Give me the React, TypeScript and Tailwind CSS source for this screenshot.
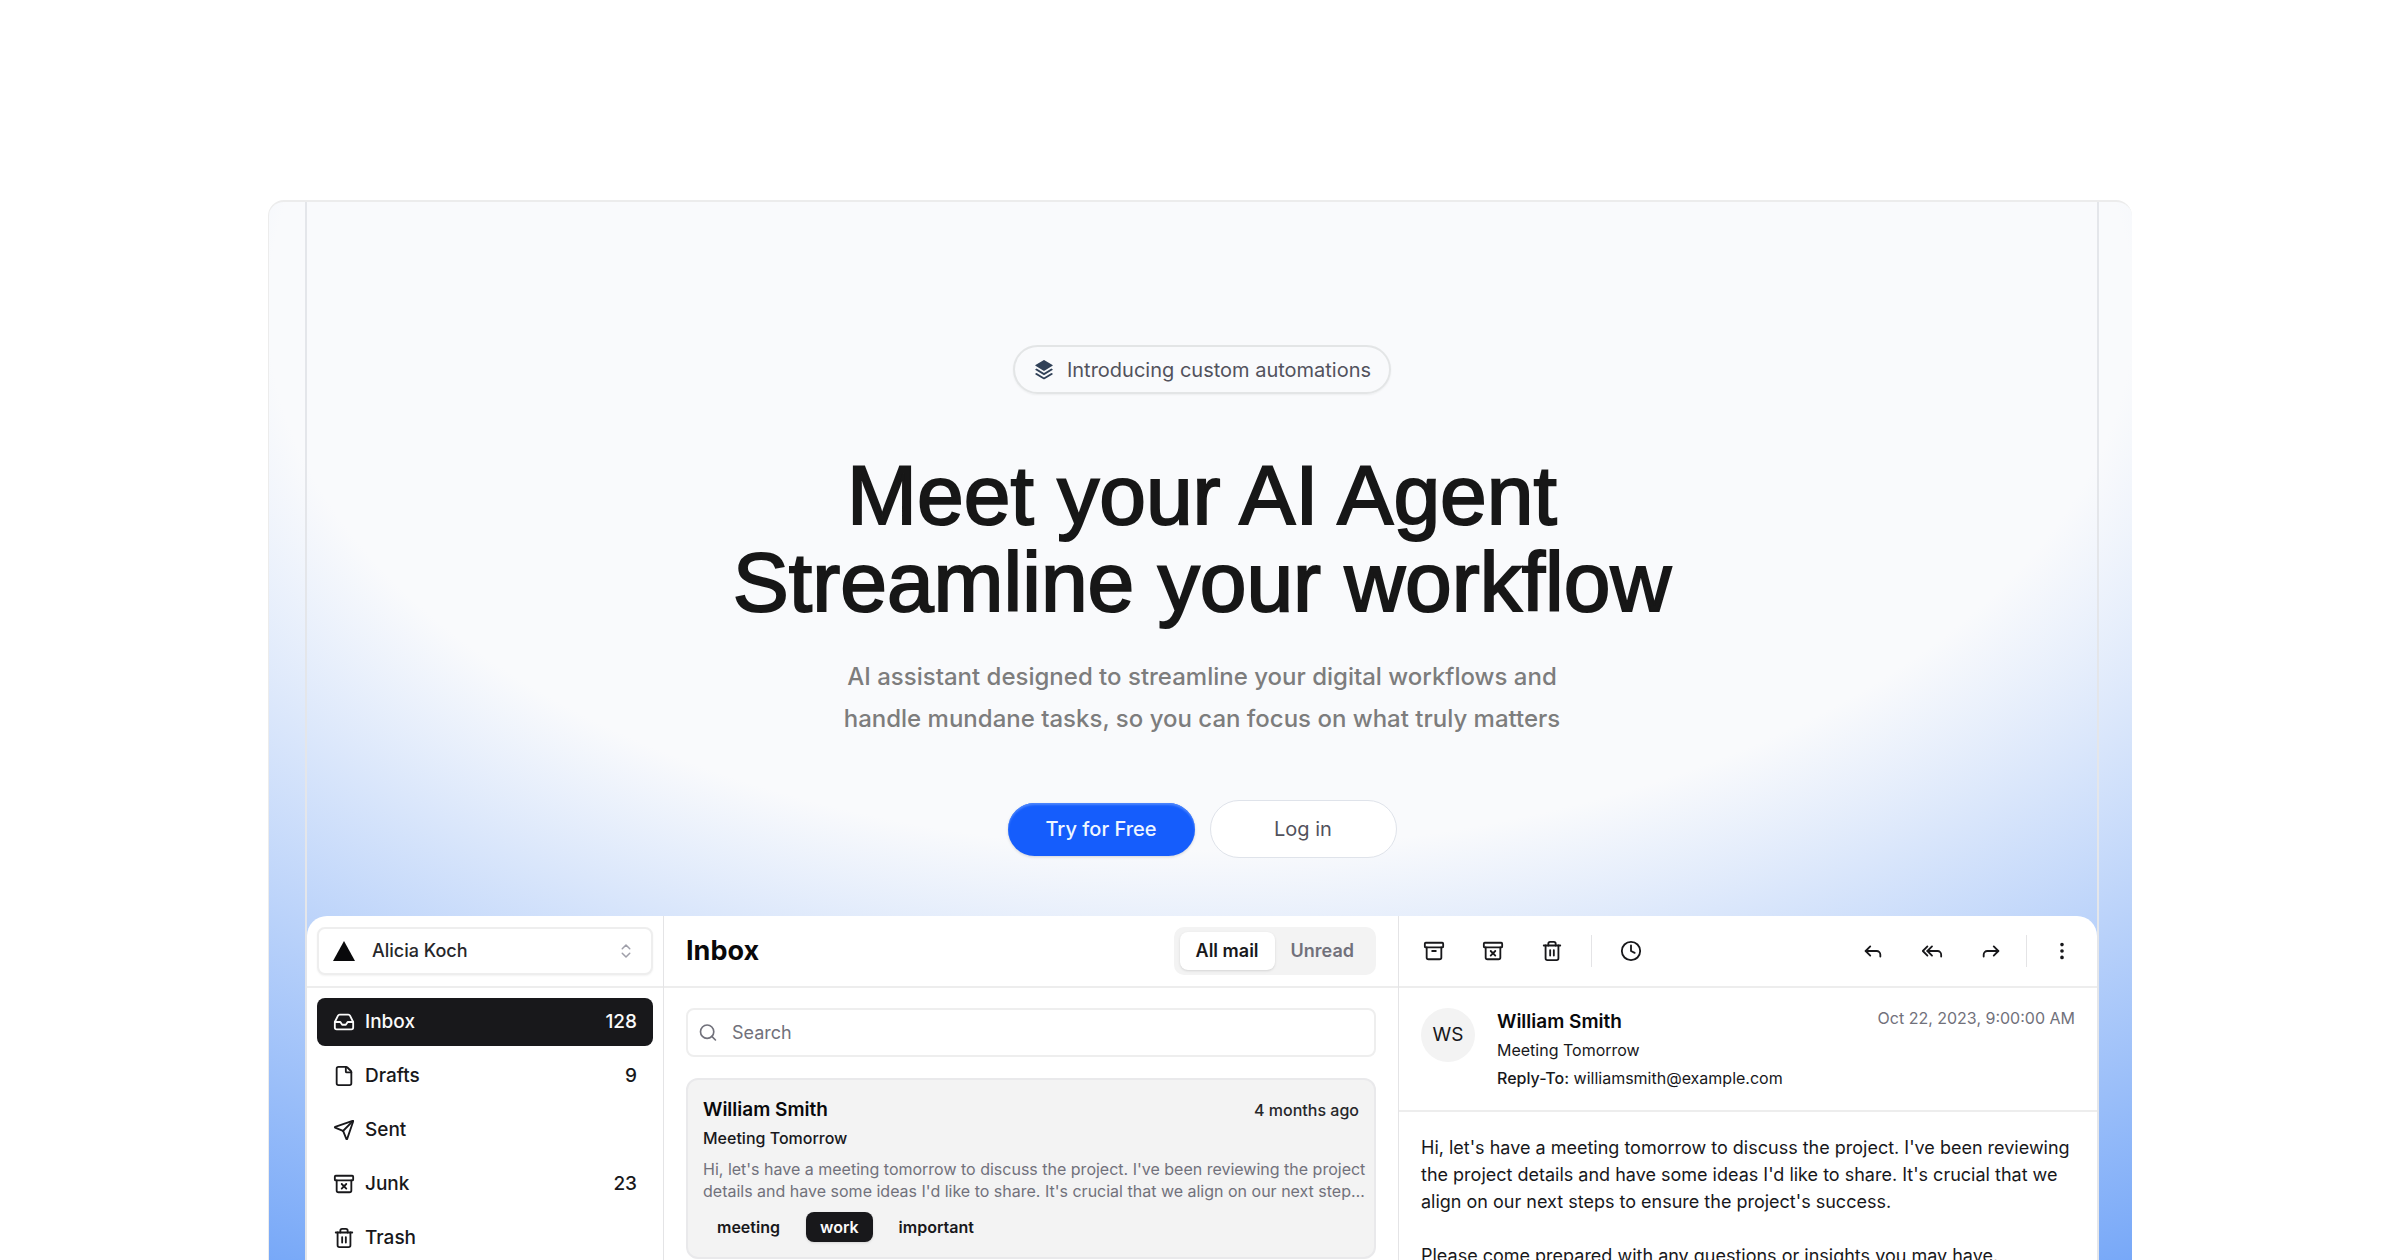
import type { ReactNode } from "react";
import {
  Archive,
  ArchiveX,
  ChevronsUpDown,
  Clock,
  EllipsisVertical,
  File,
  Forward,
  Inbox,
  Reply,
  ReplyAll,
  Search,
  Send,
  Trash2,
  type LucideIcon,
} from "lucide-react";
import { RiStackFill } from "react-icons/ri";

const folders: { label: string; icon: LucideIcon; count?: number }[] = [
  { label: "Inbox", icon: Inbox, count: 128 },
  { label: "Drafts", icon: File, count: 9 },
  { label: "Sent", icon: Send },
  { label: "Junk", icon: ArchiveX, count: 23 },
  { label: "Trash", icon: Trash2 },
];

function ToolButton({ label, icon: Icon }: { label: string; icon: LucideIcon }) {
  return (
    <button type="button" aria-label={label} className="grid size-12 place-items-center rounded-lg text-zinc-900">
      <Icon size={22} />
    </button>
  );
}

function ColumnHeader({ className, children }: { className: string; children: ReactNode }) {
  return (
    <header className={`flex h-18 shrink-0 items-center border-b-2 border-[#ededed] ${className}`}>{children}</header>
  );
}

function Sidebar() {
  return (
    <aside className="flex flex-col border-r border-[#e4e4e6]">
      <ColumnHeader className="px-2.5">
        <div className="relative w-full">
          <svg viewBox="0 0 22 20" className="pointer-events-none absolute top-3.5 left-4 h-5 w-[22px]" aria-hidden="true">
            <path d="M11 0 22 20H0Z" fill="#09090b" />
          </svg>
          <select
            aria-label="Account"
            className="h-12 w-full appearance-none rounded-lg border-2 border-[#eeeeee] bg-white pr-12 pl-[53px] text-lg font-medium text-zinc-800 shadow-xs"
          >
            <option>Alicia Koch</option>
          </select>
          <ChevronsUpDown
            size={18}
            className="pointer-events-none absolute top-[15px] right-[18px] text-zinc-400"
            aria-hidden="true"
          />
        </div>
      </ColumnHeader>
      <nav className="flex flex-col gap-1.5 px-2.5 py-2.5">
        {folders.map(({ label, icon: Icon, count }, i) => (
          <a
            key={label}
            href={`#${label.toLowerCase()}`}
            className={`flex h-12 shrink-0 items-center rounded-lg px-4 text-[19px] font-medium ${
              i === 0 ? "bg-[#18181b] text-zinc-50" : "text-zinc-900"
            }`}
          >
            <Icon size={22} className="mr-2.5" />
            {label}
            {count !== undefined && <span className="ml-auto">{count}</span>}
          </a>
        ))}
      </nav>
    </aside>
  );
}

function MailList() {
  return (
    <section className="flex flex-col border-r border-[#e4e4e6]">
      <ColumnHeader className="justify-between px-[22px]">
        <h2 className="text-[27px] font-bold text-zinc-950">Inbox</h2>
        <div role="tablist" className="flex h-12 items-center rounded-[10px] bg-[#f3f3f3] px-1.5 text-lg font-semibold">
          <button
            type="button"
            role="tab"
            aria-selected="true"
            className="h-[38px] rounded-lg bg-white px-4 text-zinc-900 shadow-sm"
          >
            All mail
          </button>
          <button type="button" role="tab" aria-selected="false" className="h-[38px] px-4 text-zinc-500">
            Unread
          </button>
        </div>
      </ColumnHeader>
      <div className="flex flex-col gap-[21px] px-[22px] py-5">
        <label className="flex h-[49px] items-center gap-3.5 rounded-lg border-2 border-[#eeeeee] px-2.5">
          <Search size={21} className="text-zinc-500" aria-hidden="true" />
          <input
            type="search"
            aria-label="Search"
            placeholder="Search"
            className="w-full bg-transparent text-lg text-zinc-900 outline-none placeholder:text-zinc-500"
          />
        </label>
        <article className="rounded-xl border-2 border-[#e9e9eb] bg-[#f3f3f3] px-[15px] pt-4 pb-[15px]">
          <div className="flex items-center justify-between">
            <h3 className="text-[19px] leading-7 font-semibold text-zinc-950">William Smith</h3>
            <time className="text-base font-medium text-zinc-800">4 months ago</time>
          </div>
          <p className="mt-0.5 text-base leading-6 font-medium text-zinc-900">Meeting Tomorrow</p>
          <p className="mt-2 text-base leading-[22px] whitespace-nowrap text-zinc-500">
            Hi, let's have a meeting tomorrow to discuss the project. I've been reviewing the project
            <br />
            details and have some ideas I'd like to share. It's crucial that we align on our next step…
          </p>
          <ul className="mt-2.5 flex gap-3 text-base font-semibold text-zinc-900">
            <li className="px-3.5 leading-[30px]">meeting</li>
            <li className="rounded-lg bg-[#18181b] px-3.5 leading-[30px] text-zinc-50 shadow-sm">work</li>
            <li className="px-3.5 leading-[30px]">important</li>
          </ul>
        </article>
      </div>
    </section>
  );
}

function MailView() {
  return (
    <section className="flex flex-col">
      <ColumnHeader className="gap-[11px] px-[11px]">
        <ToolButton label="Archive" icon={Archive} />
        <ToolButton label="Move to junk" icon={ArchiveX} />
        <ToolButton label="Move to trash" icon={Trash2} />
        <span className="mx-1 h-8 w-px bg-[#e4e4e6]" />
        <ToolButton label="Snooze" icon={Clock} />
        <div className="ml-auto flex items-center gap-[11px]">
          <ToolButton label="Reply" icon={Reply} />
          <ToolButton label="Reply all" icon={ReplyAll} />
          <ToolButton label="Forward" icon={Forward} />
          <span className="h-8 w-px bg-[#e4e4e6]" />
          <ToolButton label="More" icon={EllipsisVertical} />
        </div>
      </ColumnHeader>
      <div className="flex gap-[22px] border-b-2 border-[#ededed] px-[22px] py-5">
        <span className="grid size-[54px] shrink-0 place-items-center rounded-full bg-[#f3f3f3] text-[19px] text-zinc-900">
          WS
        </span>
        <div className="text-base text-zinc-900">
          <h3 className="text-[19px] leading-7 font-semibold text-zinc-950">William Smith</h3>
          <p className="mt-0.5 leading-6">Meeting Tomorrow</p>
          <p className="mt-1 leading-6">
            <span className="font-medium">Reply-To:</span> williamsmith@example.com
          </p>
        </div>
        <time className="ml-auto text-base leading-5 text-zinc-500">Oct 22, 2023, 9:00:00 AM</time>
      </div>
      <div className="px-[22px] py-[22px] text-lg leading-[27px] whitespace-nowrap text-zinc-900">
        <p>
          Hi, let's have a meeting tomorrow to discuss the project. I've been reviewing
          <br />
          the project details and have some ideas I'd like to share. It's crucial that we
          <br />
          align on our next steps to ensure the project's success.
        </p>
        <p className="mt-[27px]">Please come prepared with any questions or insights you may have.</p>
      </div>
    </section>
  );
}

export default function App() {
  return (
    <main className="flex h-screen flex-col overflow-hidden bg-white px-6 pt-[200px] font-['Inter',sans-serif]">
      <div className="mx-auto flex min-h-0 w-full max-w-[1864px] grow flex-col rounded-t-2xl border-t-2 border-l border-[#ececec] bg-[radial-gradient(2332px_1350px_at_50%_108px,#f9fafc_40%,#3b82f6_100%)] pr-[33px] pl-9">
        <div className="flex min-h-0 grow flex-col border-x-2 border-[#e4e6ea]">
          <section className="flex flex-col items-center pt-[143px] text-center">
            <a
              href="#automations"
              className="flex h-[49px] items-center gap-3 rounded-full border-2 border-[#e3e5e6] px-[18px] text-xl text-zinc-600 shadow-xs"
            >
              <RiStackFill size={22} className="text-slate-700" aria-hidden="true" />
              Introducing custom automations
            </a>
            <h1 className="mt-[58px] font-['Liberation_Sans',sans-serif] text-[84px] leading-[87px] text-[#171717] [-webkit-text-stroke:2px_#171717]">
              Meet your AI Agent
              <br />
              Streamline your workflow
            </h1>
            <p className="mt-[30px] text-2xl leading-[42px] font-medium text-[#7d7d7d]">
              AI assistant designed to streamline your digital workflows and
              <br />
              handle mundane tasks, so you can focus on what truly matters
            </p>
            <div className="mt-[60px] flex items-center gap-[15px] text-xl">
              <a
                href="#signup"
                className="grid h-[53px] w-[187px] place-items-center rounded-full bg-[#155dfc] font-medium text-blue-50 shadow-[inset_0_2px_2px_#4c85fd,0_1px_3px_#00000026]"
              >
                Try for Free
              </a>
              <a
                href="#login"
                className="grid h-[58px] w-[187px] place-items-center rounded-full border border-[#dfe3ea] bg-white text-zinc-600"
              >
                Log in
              </a>
            </div>
          </section>
          <div className="mt-[58px] grid min-h-0 grow grid-cols-[minmax(0,357fr)_minmax(0,735fr)_minmax(0,698fr)] overflow-hidden rounded-t-[20px] bg-white">
            <Sidebar />
            <MailList />
            <MailView />
          </div>
        </div>
      </div>
    </main>
  );
}
